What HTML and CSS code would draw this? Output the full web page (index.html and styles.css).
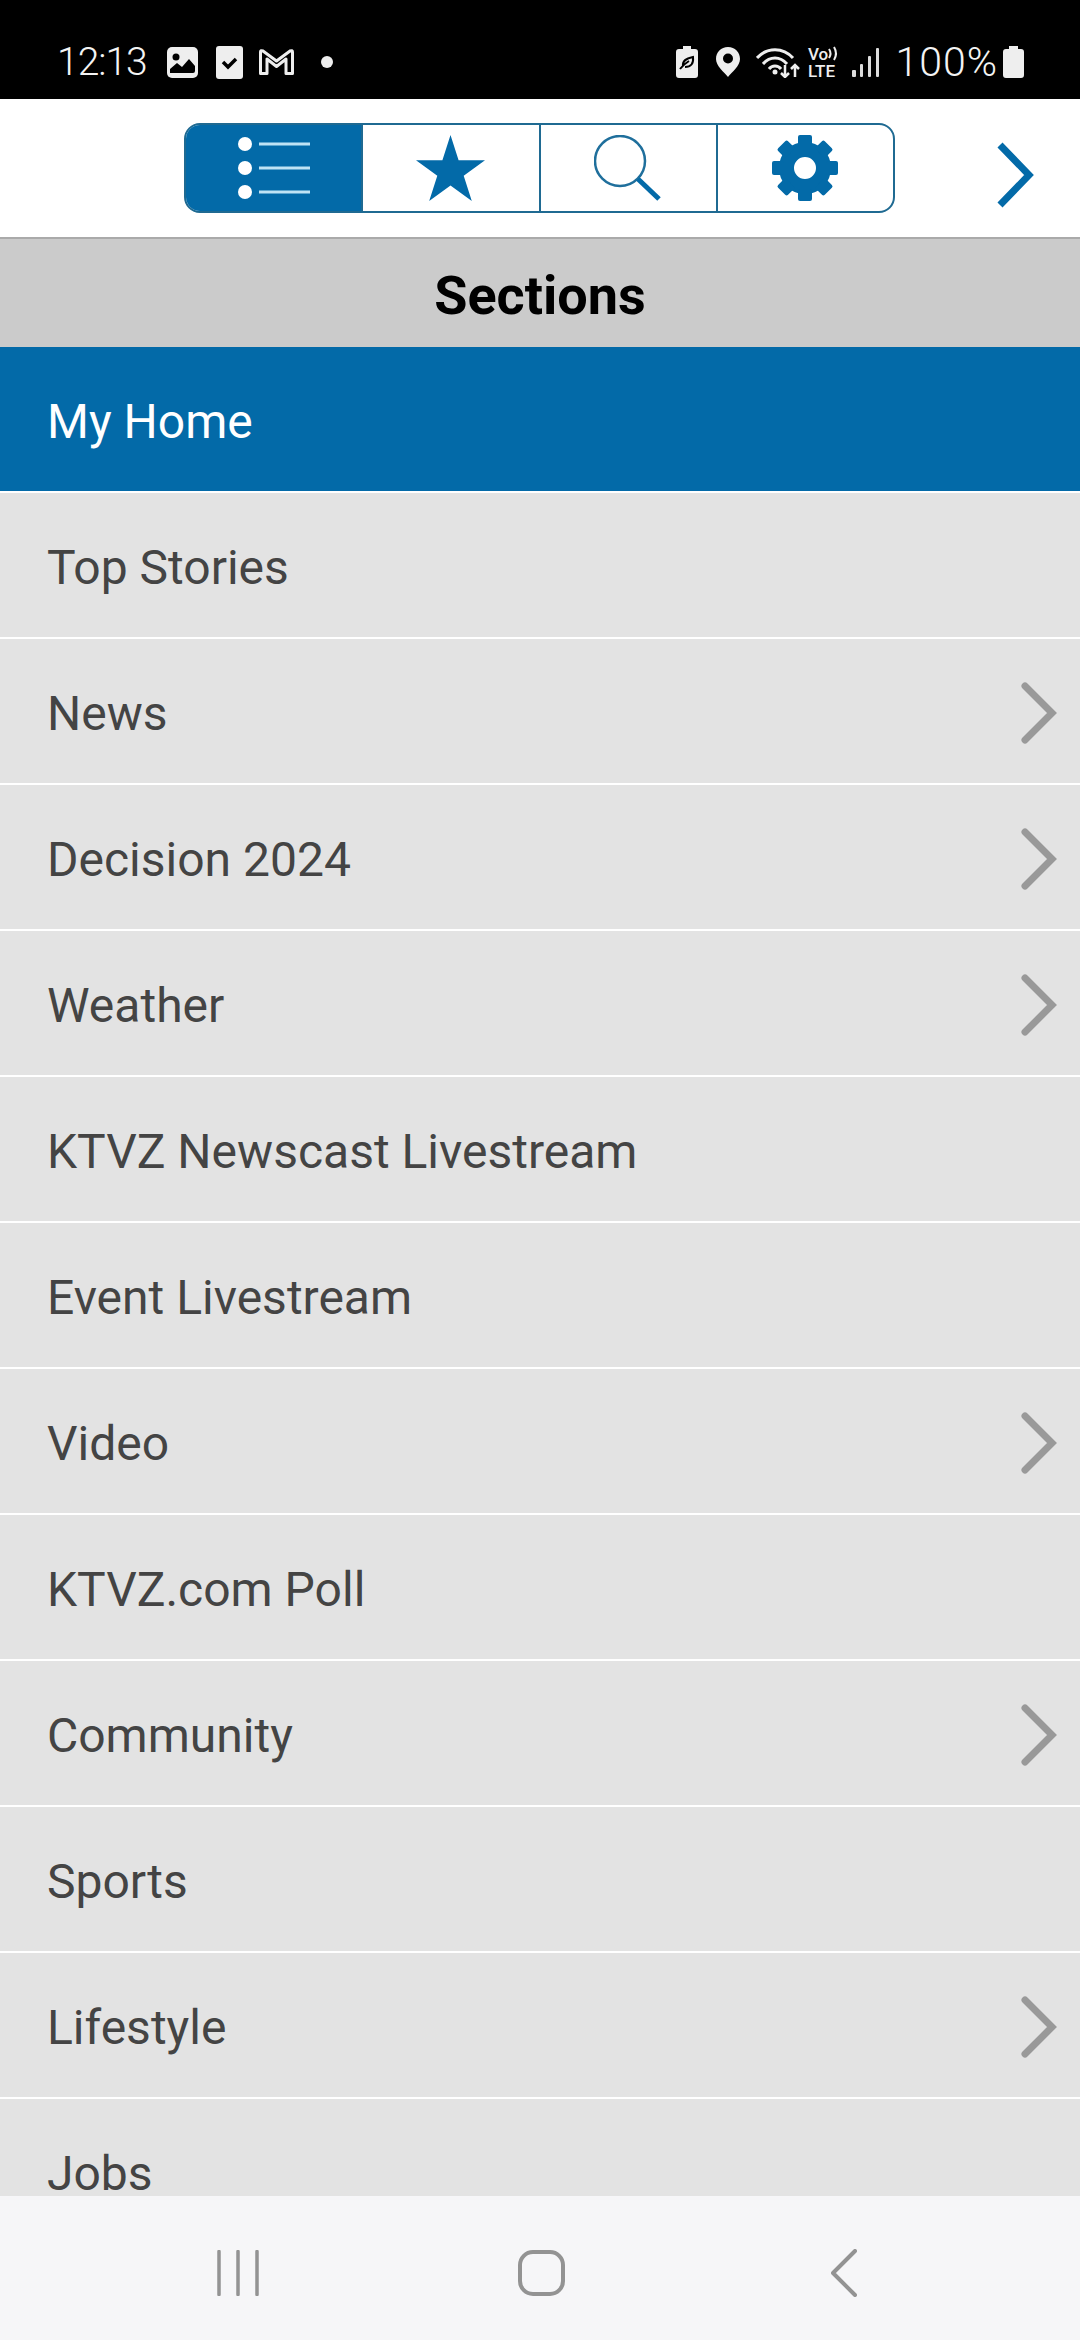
FILE: index.html
```html
<!DOCTYPE html>
<html lang="en">
<head>
    <meta charset="UTF-8">
    <title>Sections</title>
    <link rel="stylesheet" href="styles.css">
</head>

<body>
    <div class="statusbar">
        <span class="clock">12:13</span>
        <svg class="st-photo" width="31" height="31" viewBox="0 0 31 31">
            <rect width="31" height="31" rx="5" fill="#eee"/>
            <circle cx="9" cy="10" r="3.5" fill="#000"/>
            <path d="M3 26 V22 L10 16 L15 20 L22 12 L28 19 V24 Q28 26 26 26 Z" fill="#000"/>
        </svg>
        <svg class="st-check" width="27" height="33" viewBox="0 0 27 33">
            <rect width="27" height="33" rx="3" fill="#eee"/>
            <path d="M7 16 L12 21 L20 13" fill="none" stroke="#000" stroke-width="3.5"/>
        </svg>
        <svg class="st-mail" width="37" height="28" viewBox="0 0 37 28">
            <path d="M2.5 25.5 V4 Q2.500 2 5 3 L18.500 13 L32 3 Q34.500 2 34.500 4 V25.500 H28 V11 L18.500 18.500 L9 11 V25.500 Z" fill="none" stroke="#eee" stroke-width="3" stroke-linejoin="round"/>
        </svg>
        <span class="st-dot"></span>

        <svg class="st-leaf" width="22" height="32" viewBox="0 0 22 32">
            <path d="M7 0 H15 V3 H19 Q22 3 22 6 V29 Q22 32 19 32 H3 Q0 32 0 29 V6 Q0 3 3 3 H7 Z" fill="#eee"/>
            <path d="M4 23 Q8 18 13 15 M7 20 Q6 13 17 11 Q18 21 9 21" fill="none" stroke="#000" stroke-width="2"/>
        </svg>
        <svg class="st-pin" width="24" height="30" viewBox="0 0 24 30">
            <path d="M12 0 C5 0 0 5 0 12 C0 19 8 25 12 30 C16 25 24 19 24 12 C24 5 19 0 12 0 Z" fill="#eee"/>
            <circle cx="12" cy="11.500" r="5" fill="#000"/>
        </svg>
        <svg class="st-wifi" width="44" height="32" viewBox="0 0 44 32">
            <g fill="none" stroke="#eee" stroke-width="3">
                <path d="M1 12 C11 1 27 1 37 12"/>
                <path d="M7 18 C14 10 24 10 31 18"/>
                <path d="M13 23 C16 19 22 19 25 23"/>
            </g>
            <circle cx="19" cy="26" r="2.500" fill="#eee"/>
            <path d="M29 19 V31 M25 27 L29 31 L33 27 M39 31 V19 M35 23 L39 19 L43 23" fill="none" stroke="#eee" stroke-width="2.500"/>
        </svg>
        <svg class="st-volte" width="32" height="32" viewBox="0 0 32 32">
            <text x="0" y="14" class="volte-text">Vo</text>
            <path d="M21 3 Q24 7.500 21 12 M26 1 Q30 7.500 26 14" fill="none" stroke="#eee" stroke-width="2"/>
            <text x="0" y="31" class="volte-text">LTE</text>
        </svg>
        <svg class="st-signal" width="28" height="29" viewBox="0 0 28 29">
            <g fill="#ddd">
                <rect x="0" y="22" width="4" height="7" rx="1"/>
                <rect x="8" y="16" width="3" height="13" rx="1"/>
                <rect x="16" y="8" width="3" height="21" rx="1"/>
                <rect x="24" y="0" width="3" height="29" rx="1"/>
            </g>
        </svg>
        <span class="percent">100%</span>
        <svg class="st-battery" width="21" height="32" viewBox="0 0 21 32">
            <path d="M6 0 H15 V3 H18 Q21 3 21 6 V29 Q21 32 18 32 H3 Q0 32 0 29 V6 Q0 3 3 3 H6 Z" fill="#eee"/>
        </svg>
    </div>

    <div class="toolbar">
        <div class="tabs">
            <div class="tab current">
                <svg width="72" height="62" viewBox="0 0 72 62">
                    <g fill="#fff">
                        <circle cx="7" cy="7" r="7"/>
                        <circle cx="7" cy="31" r="7"/>
                        <circle cx="7" cy="55" r="7"/>
                    </g>
                    <path d="M21 7 H72 M21 31 H72 M21 55 H72" stroke="#bfe3f5" stroke-width="3"/>
                </svg>
            </div>
            <div class="tab">
                <svg width="69" height="66" viewBox="0 0 69 66">
                    <path d="M34.500 0 L42.600 25.200 H69 L47.700 40.800 L55.800 66 L34.500 50.400 L13.200 66 L21.300 40.800 L0 25.200 H26.400 Z" fill="#036aa8"/>
                </svg>
            </div>
            <div class="tab">
                <svg width="68" height="66" viewBox="0 0 68 66">
                    <circle cx="26" cy="26" r="25" fill="none" stroke="#1f6f9c" stroke-width="2.500"/>
                    <path d="M44 44 L65 64" stroke="#036aa8" stroke-width="5"/>
                </svg>
            </div>
            <div class="tab">
                <svg width="66" height="66" viewBox="-33 -33 66 66">
                    <circle r="18.500" fill="none" stroke="#036aa8" stroke-width="15"/>
                    <g fill="#036aa8">
                        <rect x="-7" y="-33" width="14" height="12" rx="2"/>
                        <rect x="-7" y="-33" width="14" height="12" rx="2" transform="rotate(45)"/>
                        <rect x="-7" y="-33" width="14" height="12" rx="2" transform="rotate(90)"/>
                        <rect x="-7" y="-33" width="14" height="12" rx="2" transform="rotate(135)"/>
                        <rect x="-7" y="-33" width="14" height="12" rx="2" transform="rotate(180)"/>
                        <rect x="-7" y="-33" width="14" height="12" rx="2" transform="rotate(225)"/>
                        <rect x="-7" y="-33" width="14" height="12" rx="2" transform="rotate(270)"/>
                        <rect x="-7" y="-33" width="14" height="12" rx="2" transform="rotate(315)"/>
                    </g>
                </svg>
            </div>
        </div>
        <svg class="next" width="38" height="66" viewBox="0 0 38 66">
            <path d="M4 3 L33 33 L4 63" fill="none" stroke="#036aa8" stroke-width="7"/>
        </svg>
    </div>

    <div class="title">Sections</div>

    <div class="list">
        <div class="row current">My Home</div>
        <div class="row">Top Stories</div>
        <div class="row">News
            <svg class="arrow" width="36" height="62" viewBox="0 0 36 62"><path d="M4 4 L31 31 L4 58" fill="none" stroke="#999" stroke-width="7" stroke-linecap="round"/></svg>
        </div>
        <div class="row">Decision 2024
            <svg class="arrow" width="36" height="62" viewBox="0 0 36 62"><path d="M4 4 L31 31 L4 58" fill="none" stroke="#999" stroke-width="7" stroke-linecap="round"/></svg>
        </div>
        <div class="row">Weather
            <svg class="arrow" width="36" height="62" viewBox="0 0 36 62"><path d="M4 4 L31 31 L4 58" fill="none" stroke="#999" stroke-width="7" stroke-linecap="round"/></svg>
        </div>
        <div class="row">KTVZ Newscast Livestream</div>
        <div class="row">Event Livestream</div>
        <div class="row">Video
            <svg class="arrow" width="36" height="62" viewBox="0 0 36 62"><path d="M4 4 L31 31 L4 58" fill="none" stroke="#999" stroke-width="7" stroke-linecap="round"/></svg>
        </div>
        <div class="row">KTVZ.com Poll</div>
        <div class="row">Community
            <svg class="arrow" width="36" height="62" viewBox="0 0 36 62"><path d="M4 4 L31 31 L4 58" fill="none" stroke="#999" stroke-width="7" stroke-linecap="round"/></svg>
        </div>
        <div class="row">Sports</div>
        <div class="row">Lifestyle
            <svg class="arrow" width="36" height="62" viewBox="0 0 36 62"><path d="M4 4 L31 31 L4 58" fill="none" stroke="#999" stroke-width="7" stroke-linecap="round"/></svg>
        </div>
        <div class="row">Jobs</div>
    </div>

    <div class="navbar">
        <svg width="42" height="46" viewBox="0 0 42 46">
            <path d="M2 1.500 V44.500 M21 1.500 V44.500 M40 1.500 V44.500" stroke="#939393" stroke-width="3.500" stroke-linecap="round"/>
        </svg>
        <svg class="nav-home" width="47" height="46" viewBox="0 0 47 46">
            <rect x="2" y="2" width="43" height="42" rx="13" fill="none" stroke="#939393" stroke-width="4"/>
        </svg>
        <svg class="nav-back" width="26" height="48" viewBox="0 0 26 48">
            <path d="M24 2 L2 24 L24 46" fill="none" stroke="#939393" stroke-width="4" stroke-linecap="round" stroke-linejoin="round"/>
        </svg>
    </div>
</body>
</html>
```

FILE: styles.css
```css
body {
    font-family: Roboto, "Liberation Sans", sans-serif;
    margin: 0;
    width: 1080px;
    height: 2340px;
    overflow: hidden;
    display: flex;
    flex-direction: column;
    background-color: #ffffff;
}

.statusbar {
    height: 99px;
    flex-shrink: 0;
    background-color: #000000;
    color: #f4f4f4;
    display: flex;
    align-items: center;
    padding: 25px 56px 0 57px;
    box-sizing: border-box;
}
.clock, .percent {
    font-size: 39px;
    font-weight: 300;
    line-height: 40px;
}
.clock { letter-spacing: -1px; }
.percent {
    font-size: 41px;
    letter-spacing: 1px;
    margin-left: 15px;
}
.st-photo { margin-left: 20px; }
.st-check { margin-left: 18px; }
.st-mail { margin-left: 15px; }
.st-dot {
    width: 12px;
    height: 12px;
    border-radius: 50%;
    background-color: #eeeeee;
    margin-left: 26px;
    margin-right: auto;
}
.st-pin { margin-left: 18px; }
.st-wifi { margin-left: 16px; }
.st-volte {
    margin-left: 8px;
    overflow: visible;
}
.st-signal { margin-left: 12px; }
.st-battery { margin-left: 5px; }
.volte-text {
    font-family: Roboto, sans-serif;
    font-size: 17px;
    font-weight: 500;
    fill: #eeeeee;
}

.toolbar {
    height: 138px;
    flex-shrink: 0;
    display: flex;
    align-items: center;
    padding-left: 184px;
    box-sizing: border-box;
}
.tabs {
    display: flex;
    width: 711px;
    height: 90px;
    box-sizing: border-box;
    border: 2px solid #1f6a92;
    border-radius: 16px;
    overflow: hidden;
}
.tab {
    flex: 1;
    display: flex;
    align-items: center;
    justify-content: center;
    border-left: 2px solid #1f6a92;
}
.tab:first-child {
    border-left: none;
}
.tab.current {
    background-color: #036aa8;
}
.next {
    margin-left: 101px;
    margin-top: 13px;
}

.title {
    height: 110px;
    flex-shrink: 0;
    box-sizing: border-box;
    border-top: 2px solid #aaaaaa;
    padding-top: 4px;
    background-color: #cbcbcb;
    color: #000000;
    font-size: 54px;
    font-weight: 700;
    display: flex;
    align-items: center;
    justify-content: center;
}

.list {
    flex: 1;
    overflow: hidden;
    background-color: #e3e3e3;
}
.row {
    height: 146px;
    box-sizing: border-box;
    border-bottom: 2px solid #ffffff;
    background-color: #e3e3e3;
    color: #444444;
    font-size: 48px;
    line-height: 44px;
    display: flex;
    align-items: center;
    justify-content: space-between;
    padding: 6px 23px 0 47px;
}
.row.current {
    background-color: #036aa8;
    color: #ffffff;
}
.arrow {
    margin-top: -3px;
}

.navbar {
    height: 144px;
    flex-shrink: 0;
    box-sizing: border-box;
    background-color: #f6f6f8;
    display: flex;
    align-items: center;
    padding: 10px 0 0 217px;
}
.nav-home { margin-left: 259px; }
.nav-back { margin-left: 266px; }
```
